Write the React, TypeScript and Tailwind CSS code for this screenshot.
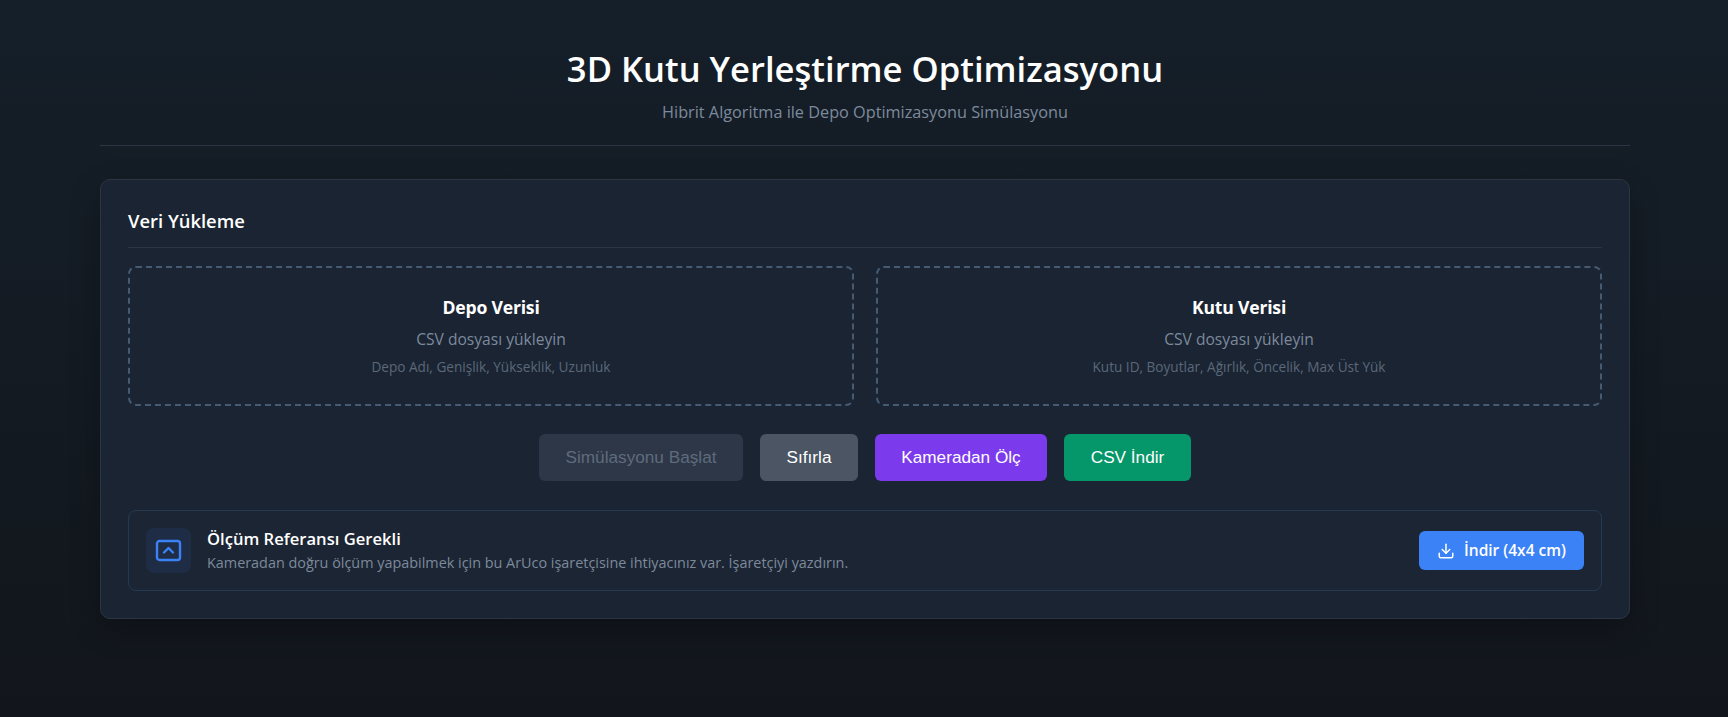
import { Download } from "lucide-react";

const uploads = [
  { title: "Depo Verisi", hint: "Depo Adı, Genişlik, Yükseklik, Uzunluk" },
  { title: "Kutu Verisi", hint: "Kutu ID, Boyutlar, Ağırlık, Öncelik, Max Üst Yük" },
];

const btn = "h-[47px] rounded-md text-[17.2px] font-['Liberation_Sans',sans-serif]";

export default function App() {
  return (
    <div className="min-h-[717px] bg-gradient-to-b from-[#151f29] to-[#12161c] font-['Open_Sans',sans-serif] pl-[100px] pr-[98px]">
      <header className="h-[146px] pt-[42px] text-center border-b border-[#2b3543]">
        <h1 className="text-[34.6px] leading-[54px] font-semibold text-white">3D Kutu Yerleştirme Optimizasyonu</h1>
        <p className="text-[16.25px] leading-[24px] mt-[4px] text-[#7d8a9c]">Hibrit Algoritma ile Depo Optimizasyonu Simülasyonu</p>
      </header>

      <main className="mt-[33px] h-[440px] rounded-[10px] border border-[#2b3543] bg-[#1a2433] px-[27px] pt-[27px] shadow-[0_10px_30px_rgba(0,0,0,0.25)]">
        <h2 className="h-[41px] border-b border-[#2b3543] text-[18.4px] leading-[28px] font-semibold text-white">Veri Yükleme</h2>

        <div className="mt-[18px] grid grid-cols-2 gap-[22px]">
          {uploads.map((u) => (
            <div key={u.title} className="h-[140px] rounded-lg border-2 border-dashed border-[#465a72] pt-[25px] text-center">
              <h3 className="text-[17.6px] leading-[28px] font-bold text-white tracking-[-0.2px]">{u.title}</h3>
              <p className="mt-[6px] text-[15.6px] leading-[24px] text-[#7d8a9c]">CSV dosyası yükleyin</p>
              <p className="mt-[6px] text-[13.6px] leading-[20px] text-[#5b6879]">{u.hint}</p>
            </div>
          ))}
        </div>

        <div className="mt-[28px] flex justify-center gap-[17px]">
          <button className={`${btn} w-[204px] bg-[#2d3748] text-[#5f6b7c]`}>Simülasyonu Başlat</button>
          <button className={`${btn} w-[98px] bg-[#4b5563] text-white`}>Sıfırla</button>
          <button className={`${btn} w-[172px] bg-[#7c3aed] text-white`}>Kameradan Ölç</button>
          <button className={`${btn} w-[127px] bg-[#059669] text-white`}>CSV İndir</button>
        </div>

        <div className="mt-[29px] h-[81px] flex items-center rounded-lg border border-[#273852] bg-[#1c2533] pl-[17px] pr-[17px]">
          <div className="w-[45px] h-[45px] rounded-lg bg-[#1e2d45] flex items-center justify-center">
            <svg width="27" height="23" viewBox="0 0 27 23" fill="none" stroke="#3b82f6" strokeWidth="2.4" strokeLinecap="round" strokeLinejoin="round">
              <rect x="2" y="2" width="23" height="19" rx="2.5" />
              <path d="M9 13.5l4.500-4.500 4.500 4.500" />
            </svg>
          </div>
          <div className="ml-[16px] flex-1">
            <h4 className="text-[16.6px] leading-[24px] font-semibold text-white -mt-[1px]">Ölçüm Referansı Gerekli</h4>
            <p className="mt-[1px] text-[14.4px] leading-[21px] text-[#7d8a9c]">Kameradan doğru ölçüm yapabilmek için bu ArUco işaretçisine ihtiyacınız var. İşaretçiyi yazdırın.</p>
          </div>
          <button className="w-[165px] h-[39px] rounded-md bg-[#3b82f6] text-white text-[15.5px] font-semibold flex items-center justify-center gap-[9px]">
            <Download size={18} />
            İndir (4x4 cm)
          </button>
        </div>
      </main>
    </div>
  );
}
